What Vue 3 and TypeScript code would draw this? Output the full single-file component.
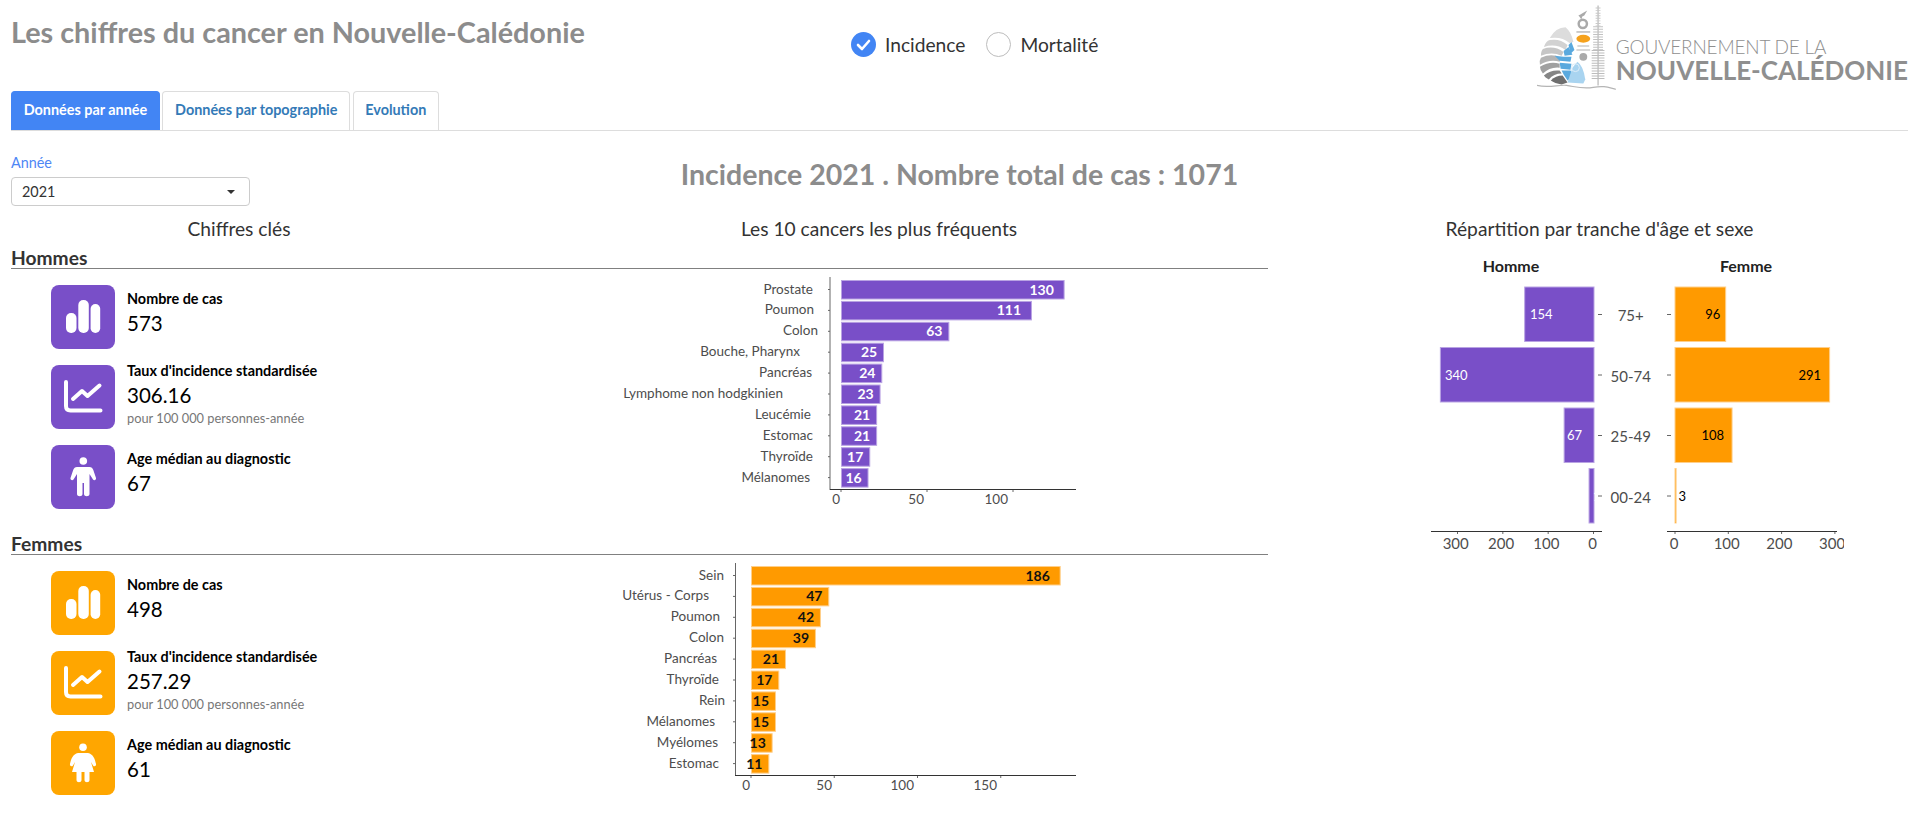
<script setup lang="ts">
interface Bar {
  name: string;
  value: number;
  end: number;
}

interface Stat {
  icon: "bars" | "trend" | "person";
  label: string;
  value: string;
  note?: string;
}

const tabs = ["Données par année", "Données par topographie", "Evolution"];

const menBars: Bar[] = [
  { name: "Prostate", value: 130, end: 813 },
  { name: "Poumon", value: 111, end: 814 },
  { name: "Colon", value: 63, end: 818 },
  { name: "Bouche, Pharynx", value: 25, end: 800 },
  { name: "Pancréas", value: 24, end: 812 },
  { name: "Lymphome non hodgkinien", value: 23, end: 783 },
  { name: "Leucémie", value: 21, end: 811 },
  { name: "Estomac", value: 21, end: 813 },
  { name: "Thyroïde", value: 17, end: 813 },
  { name: "Mélanomes", value: 16, end: 810 },
];

const womenBars: Bar[] = [
  { name: "Sein", value: 186, end: 724 },
  { name: "Utérus - Corps", value: 47, end: 709 },
  { name: "Poumon", value: 42, end: 720 },
  { name: "Colon", value: 39, end: 724 },
  { name: "Pancréas", value: 21, end: 717 },
  { name: "Thyroïde", value: 17, end: 719 },
  { name: "Rein", value: 15, end: 725 },
  { name: "Mélanomes", value: 15, end: 715 },
  { name: "Myélomes", value: 13, end: 718 },
  { name: "Estomac", value: 11, end: 719 },
];

const menStats: Stat[] = [
  { icon: "bars", label: "Nombre de cas", value: "573" },
  { icon: "trend", label: "Taux d'incidence standardisée", value: "306.16", note: "pour 100 000 personnes-année" },
  { icon: "person", label: "Age médian au diagnostic", value: "67" },
];

const womenStats: Stat[] = [
  { icon: "bars", label: "Nombre de cas", value: "498" },
  { icon: "trend", label: "Taux d'incidence standardisée", value: "257.29", note: "pour 100 000 personnes-année" },
  { icon: "person", label: "Age médian au diagnostic", value: "61" },
];

const menTicks = [
  { value: 0, end: 840 },
  { value: 50, end: 924 },
  { value: 100, end: 1008 },
];

const womenTicks = [
  { value: 0, end: 750 },
  { value: 50, end: 832 },
  { value: 100, end: 914 },
  { value: 150, end: 997 },
];

const ages = ["75+", "50-74", "25-49", "00-24"];
const pyramidMen = [154, 340, 67, 12];
const pyramidWomen = [96, 291, 108, 3];
const womenValueX = [1712.7, 1809.7, 1712.7, 1682.3];
const menValueX = [1530, 1445, 1567, 1593];

function rowY(i: number) {
  return 287 + i * 60.5;
}

function valueOffset(v: number) {
  return v >= 100 ? 23 : 15;
}

// nautilus of the logo, outer chambers from light to dark
const chambers = [
  { fill: "#dcdcdc", d: "M50 38Q56 27 66 27Q72 32 74 42L70 43Q62 36 50 38Z" },
  { fill: "#d2d2d2", d: "M44 47Q46 41 50 40Q60 38 68 45L66 50Q56 43 44 47Z" },
  { fill: "#c6c6c6", d: "M41 56Q41 51 43 49Q54 45 64 52L62 56Q52 51 41 56Z" },
  { fill: "#b4b4b4", d: "M40 65Q39 61 41 58Q52 53 61 58L60 62Q50 59 40 65Z" },
  { fill: "#a0a0a0", d: "M43 74Q40 70 40 67Q50 61 60 64L60 68Q50 67 43 74Z" },
  { fill: "#858585", d: "M49 80Q45 78 44 76Q51 70 60 71L62 74Q54 74 49 80Z" },
  { fill: "#6e6e6e", d: "M62 85Q55 84 51 81Q56 76 63 76L68 83Z" },
];

const blues = [
  "M69 45L72 42L75 50L71 54Z",
  "M64 51L69 47L73 55L65 56Z",
  "M55 56L64 57L72 57L71 62L60 61Z",
  "M60 63L72 64L71 70L61 69Z",
  "M62 71L71 71L75 76L68 81L64 75Z",
];
</script>

<template>
  <div class="page">
    <header class="top">
      <h1>Les chiffres du cancer en Nouvelle-Calédonie</h1>
      <div class="radios">
        <span class="radio checked">
          <svg viewBox="0 0 25 25" width="25" height="25">
            <path d="M7 13l4 4 7-8" fill="none" stroke="#fff" stroke-width="2.6" stroke-linecap="round" stroke-linejoin="round" />
          </svg>
        </span>
        <span class="radio-label">Incidence</span>
        <span class="radio"></span>
        <span class="radio-label">Mortalité</span>
      </div>
      <div class="logo">
        <svg width="80" height="91" viewBox="37 0 80 91">
          <path v-for="c in chambers" :key="c.d" :d="c.d" :fill="c.fill" />
          <path v-for="d in blues" :key="d" :d="d" fill="#5aa9de" />
          <path d="M73 68L78 62Q84 66 86 80L84 84L68 83Z" fill="#a9d4f0" />
          <circle cx="76" cy="68" r="4" fill="none" stroke="#dcecf8" stroke-width="1" />
          <path d="M37 86c12 3 22-1 30 0s16 4 27 2 15 0 23 2" fill="none" stroke="#b5b5b5" stroke-width="1.2" />
          <path d="M79 15c3-1 5-3 9-5l-3 5-2 1-1 3-2-3z" fill="#aaa" />
          <circle cx="83.500" cy="23.500" r="4.200" fill="none" stroke="#aaa" stroke-width="2.500" />
          <rect x="77" y="31" width="14" height="1.500" fill="#bbb" />
          <ellipse cx="84" cy="38.700" rx="7" ry="4" fill="#f5a11c" />
          <path d="M78 46h12M77 50h14" stroke="#ccc" stroke-width="1.500" />
          <circle cx="84" cy="57" r="4" fill="#aaa" />
          <line x1="99" y1="5" x2="99" y2="86" stroke="#b5b5b5" stroke-width="1.200" />
          <line x1="99" y1="7" x2="99" y2="26" stroke="#c8c8c8" stroke-width="5" stroke-dasharray="1 1.600" />
          <line x1="99" y1="26" x2="99" y2="50" stroke="#c2c2c2" stroke-width="10" stroke-dasharray="1 1.600" />
          <line x1="99" y1="50" x2="99" y2="80" stroke="#bdbdbd" stroke-width="13" stroke-dasharray="1 1.600" />
        </svg>
        <div class="logo-text">
          <span class="logo-small">GOUVERNEMENT DE LA</span>
          <span class="logo-big">NOUVELLE-CALÉDONIE</span>
        </div>
      </div>
    </header>

    <nav class="tabs">
      <a v-for="(t, i) in tabs" :key="t" class="tab" :class="{ active: i === 0 }">{{ t }}</a>
    </nav>

    <div class="toolbar">
      <div class="year">
        <label>Année</label>
        <div class="select">
          <span>2021</span>
          <i class="caret"></i>
        </div>
      </div>
      <h2>Incidence 2021 . Nombre total de cas : 1071</h2>
    </div>

    <div class="col-titles">
      <h3>Chiffres clés</h3>
      <h3>Les 10 cancers les plus fréquents</h3>
      <h3>Répartition par tranche d'âge et sexe</h3>
    </div>

    <div class="body">
      <div class="sections">
        <section class="men">
          <h4>Hommes</h4>
          <div class="row">
            <ul class="stats">
              <li v-for="s in menStats" :key="s.label" class="stat">
                <span class="icon">
                  <svg viewBox="0 0 64 64" width="64" height="64">
                    <g v-if="s.icon === 'bars'" fill="#fff">
                      <rect x="15" y="28" width="10.500" height="20" rx="5" />
                      <rect x="27.300" y="15" width="10.500" height="33" rx="5" />
                      <rect x="39.600" y="19" width="9.600" height="29" rx="4.800" />
                    </g>
                    <g v-else-if="s.icon === 'trend'" fill="none" stroke="#fff" stroke-width="4" stroke-linecap="round" stroke-linejoin="round">
                      <path d="M15 17V41q0 4.500 4.500 4.500H49.500" />
                      <path d="M22 34l9-8 5.500 5 12-10.500" />
                    </g>
                    <g v-else fill="#fff">
                      <circle cx="32.300" cy="16" r="3.800" />
                      <path d="M26 22H38.500C40.500 22 41.500 23 42.300 25L45 33C45.500 35 43 36 42 34.500L38.500 29V49C38.500 52 33 52 33 49V38H31.500V49C31.500 52 26 52 26 49V29L22.500 34.500C21.500 36 19 35 19.500 33L22.200 25C23 23 24 22 26 22Z" />
                    </g>
                  </svg>
                </span>
                <div class="stat-text">
                  <strong>{{ s.label }}</strong>
                  <span class="value">{{ s.value }}</span>
                  <small v-if="s.note">{{ s.note }}</small>
                </div>
              </li>
            </ul>
            <svg class="chart" width="500" height="240" viewBox="600 269 500 240">
              <line x1="830" y1="277" x2="830" y2="490" class="axis" />
              <line x1="830" y1="489.500" x2="1076" y2="489.500" class="axis dark" />
              <g v-for="(b, i) in menBars" :key="b.name">
                <line x1="828" x2="830" :y1="289.500 + i * 20.900" :y2="289.500 + i * 20.900" class="axis" />
                <text :x="b.end" :y="288.500 + i * 20.900" class="tick-label" text-anchor="end">{{ b.name }}</text>
                <rect x="841.500" :y="280.500 + i * 20.900" :width="b.value * 1.72 - 1" height="18.500" class="bar-men" />
                <text :x="841 + b.value * 1.72 - valueOffset(b.value)" :y="289 + i * 20.900" class="bar-value white" text-anchor="middle">{{ b.value }}</text>
              </g>
              <g v-for="t in menTicks" :key="t.value">
                <line :x1="841 + t.value * 1.72" :x2="841 + t.value * 1.72" y1="490" y2="492" class="axis" />
                <text :x="t.end" y="499" class="tick-label" text-anchor="end">{{ t.value }}</text>
              </g>
            </svg>
          </div>
        </section>

        <section class="women">
          <h4>Femmes</h4>
          <div class="row">
            <ul class="stats">
              <li v-for="s in womenStats" :key="s.label" class="stat">
                <span class="icon">
                  <svg viewBox="0 0 64 64" width="64" height="64">
                    <g v-if="s.icon === 'bars'" fill="#fff">
                      <rect x="15" y="28" width="10.500" height="20" rx="5" />
                      <rect x="27.300" y="15" width="10.500" height="33" rx="5" />
                      <rect x="39.600" y="19" width="9.600" height="29" rx="4.800" />
                    </g>
                    <g v-else-if="s.icon === 'trend'" fill="none" stroke="#fff" stroke-width="4" stroke-linecap="round" stroke-linejoin="round">
                      <path d="M15 17V41q0 4.500 4.500 4.500H49.500" />
                      <path d="M22 34l9-8 5.500 5 12-10.500" />
                    </g>
                    <g v-else fill="#fff">
                      <circle cx="32" cy="16.300" r="3.800" />
                      <path d="M27 22H37C42 23 44 28 45 33C45.500 35.500 43 36 42 34.500L40 31L43 41H38.500V49C38.500 52 33.500 52 33.500 49V41H30.500V49C30.500 52 25.500 52 25.500 49V41H21L24 31L22 34.500C21 36 18.500 35.500 19 33C20 28 22 23 27 22Z" />
                    </g>
                  </svg>
                </span>
                <div class="stat-text">
                  <strong>{{ s.label }}</strong>
                  <span class="value">{{ s.value }}</span>
                  <small v-if="s.note">{{ s.note }}</small>
                </div>
              </li>
            </ul>
            <svg class="chart" width="500" height="240" viewBox="600 555 500 240">
              <line x1="735.500" y1="563" x2="735.500" y2="776" class="axis" />
              <line x1="735" y1="775.500" x2="1076" y2="775.500" class="axis dark" />
              <g v-for="(b, i) in womenBars" :key="b.name">
                <line x1="733" x2="735" :y1="575.500 + i * 20.900" :y2="575.500 + i * 20.900" class="axis" />
                <text :x="b.end" :y="574.500 + i * 20.900" class="tick-label" text-anchor="end">{{ b.name }}</text>
                <rect x="751.500" :y="566.500 + i * 20.900" :width="b.value * 1.665 - 1" height="18.500" class="bar-women" />
                <text :x="751 + b.value * 1.665 - valueOffset(b.value)" :y="575 + i * 20.900" class="bar-value" text-anchor="middle">{{ b.value }}</text>
              </g>
              <g v-for="t in womenTicks" :key="t.value">
                <line :x1="751 + t.value * 1.665" :x2="751 + t.value * 1.665" y1="776" y2="778" class="axis" />
                <text :x="t.end" y="785" class="tick-label" text-anchor="end">{{ t.value }}</text>
              </g>
            </svg>
          </div>
        </section>
      </div>

      <svg class="pyramid" width="617" height="310" viewBox="1291 241 617 310">
        <defs>
          <clipPath id="right-clip"><rect x="1660" y="241" width="184" height="310" /></clipPath>
        </defs>
        <text x="1511" y="265" class="pyr-title" text-anchor="middle">Homme</text>
        <text x="1746" y="265" class="pyr-title" text-anchor="middle">Femme</text>

        <g v-for="(age, i) in ages" :key="age">
          <rect :x="1594 - pyramidMen[i] * 0.4533 + 0.5" :y="rowY(i)" :width="pyramidMen[i] * 0.4533 - 0.5" height="54.500" class="bar-men" />
          <text :x="menValueX[i]" :y="rowY(i) + 27" class="pyr-value white">{{ pyramidMen[i] }}</text>
          <line x1="1598" x2="1602" :y1="rowY(i) + 27.500" :y2="rowY(i) + 27.500" class="axis" />
          <text x="1630.700" :y="rowY(i) + 28" class="age-label" text-anchor="middle">{{ age }}</text>
          <line x1="1667" x2="1671" :y1="rowY(i) + 27.500" :y2="rowY(i) + 27.500" class="axis" />
          <rect x="1675" :y="rowY(i)" :width="Math.max(pyramidWomen[i] * 0.533 - 0.5, 1)" height="54.500" class="bar-women" />
          <text :x="womenValueX[i]" :y="rowY(i) + 27" class="pyr-value" text-anchor="middle">{{ pyramidWomen[i] }}</text>
        </g>

        <line x1="1431" x2="1602" y1="531.500" y2="531.500" class="axis dark" />
        <line x1="1667" x2="1837" y1="531.500" y2="531.500" class="axis dark" />
        <g clip-path="url(#right-clip)">
          <text v-for="v in [0, 100, 200, 300]" :key="v" :x="1674 + v * 0.527" y="543" class="age-label" text-anchor="middle">{{ v }}</text>
        </g>
        <g v-for="v in [0, 100, 200, 300]" :key="v">
          <line :x1="1593.500 - v * 0.4533" :x2="1593.500 - v * 0.4533" y1="532" y2="534" class="axis" />
          <text :x="1592.700 - v * 0.4533 - (v ? 1 : 0)" y="543" class="age-label" text-anchor="middle">{{ v }}</text>
          <line :x1="1675 + v * 0.533" :x2="1675 + v * 0.533" y1="532" y2="534" class="axis" />
        </g>
      </svg>
    </div>
  </div>
</template>

<style>
html,
body {
  background: #fff;
}
</style>

<style scoped>
.page {
  width: 1919px;
  height: 831px;
  box-sizing: border-box;
  padding: 0 11px;
  font-family: Lato, "Open Sans", sans-serif;
  color: #333;
  overflow: hidden;
}

.top {
  display: grid;
  grid-template-columns: 840px 1fr 371px;
  height: 91px;
}

h1 {
  margin: 0;
  padding-top: 15px;
  font-size: 28.800px;
  line-height: 34px;
  font-weight: 700;
  color: #8c8c8c;
}

.radios {
  display: flex;
  align-items: center;
  height: 25px;
  margin-top: 32px;
}

.radio {
  box-sizing: border-box;
  width: 25px;
  height: 25px;
  border: 1px solid #bdbdbd;
  border-radius: 50%;
  flex: none;
}

.radio.checked {
  background: #4285f4;
  border: 0;
}

.radio svg {
  display: block;
}

.radio-label {
  font-size: 19.200px;
  margin: 0 21px 0 9px;
}

.logo {
  display: flex;
}

.logo-text {
  display: flex;
  flex-direction: column;
  padding-top: 37px;
  white-space: nowrap;
}

.logo-small {
  font-size: 19px;
  line-height: 20px;
  letter-spacing: -0.2px;
  font-weight: 300;
  color: #8f8f8f;
}

.logo-big {
  font-size: 26px;
  line-height: 26px;
  font-weight: 700;
  color: #8f8f8f;
}

.tabs {
  display: flex;
  gap: 2.500px;
  height: 39px;
  border-bottom: 1px solid #ddd;
}

.tab {
  box-sizing: border-box;
  height: 39px;
  padding: 0 11.700px;
  border: 1px solid #ddd;
  border-bottom: 0;
  border-radius: 4px 4px 0 0;
  font-size: 14.400px;
  font-weight: 700;
  line-height: 36px;
  color: #337ab7;
}

.tab.active {
  background: #4285f4;
  border-color: #4285f4;
  color: #fff;
}

.toolbar {
  display: grid;
  grid-template-columns: 239px 1fr 239px;
  padding-top: 24px;
}

.year label {
  display: block;
  height: 16px;
  margin-bottom: 6px;
  font-size: 14.400px;
  line-height: 16px;
  color: #4d86f5;
}

.select {
  box-sizing: border-box;
  height: 29px;
  padding: 0 14px 0 10px;
  display: flex;
  align-items: center;
  justify-content: space-between;
  border: 1px solid #ccc;
  border-radius: 4px;
  font-size: 14.400px;
  color: #333;
}

.caret {
  width: 0;
  height: 0;
  border-left: 4px solid transparent;
  border-right: 4px solid transparent;
  border-top: 4px solid #333;
}

h2 {
  margin: 1px 0 0;
  text-align: center;
  font-size: 28.500px;
  line-height: 36px;
  font-weight: 700;
  color: #8c8c8c;
}

.col-titles {
  display: grid;
  grid-template-columns: 456px 824px 1fr;
  margin-top: 11px;
}

h3 {
  margin: 0;
  text-align: center;
  font-size: 19.200px;
  line-height: 24px;
  font-weight: 400;
}

.body {
  display: flex;
}

.sections {
  width: 1257px;
  flex: none;
  padding-top: 7px;
}

h4 {
  box-sizing: border-box;
  height: 21px;
  margin: 0;
  font-size: 19.200px;
  line-height: 20px;
  font-weight: 700;
  border-bottom: 1px solid #808080;
}

.row {
  display: flex;
  height: 265px;
}

.stats {
  width: 589px;
  flex: none;
  margin: 0;
  padding: 16px 0 0 40px;
  box-sizing: border-box;
  list-style: none;
  display: flex;
  flex-direction: column;
  gap: 16px;
}

.stat {
  display: flex;
  align-items: center;
  gap: 12px;
  height: 64px;
}

.icon {
  width: 64px;
  height: 64px;
  border-radius: 8px;
  flex: none;
}

.icon svg {
  display: block;
}

.men .icon {
  background: #794fc8;
}

.women .icon {
  background: #ffa600;
}

.stat-text {
  display: flex;
  flex-direction: column;
  margin-bottom: 7px;
}

.stat-text strong {
  font-size: 14.400px;
  line-height: 18px;
  color: #000;
}

.value {
  font-size: 20.500px;
  line-height: 30px;
  color: #000;
}

.stat-text small {
  font-size: 12.800px;
  line-height: 16px;
  color: #777;
}

.chart,
.pyramid {
  display: block;
  flex: none;
}

.pyramid {
  margin-left: 23px;
}

.axis {
  stroke: #666;
  stroke-width: 1;
}

.axis.dark {
  stroke: #333;
}

.tick-label {
  font-size: 13.500px;
  fill: #4d4d4d;
  dominant-baseline: central;
}

.bar-men {
  fill: #794fc8;
  stroke: #b9a3e3;
  stroke-width: 1;
}

.bar-women {
  fill: #ff9a00;
  stroke: #ffcf8a;
  stroke-width: 1;
}

.bar-value {
  font-size: 14px;
  font-weight: 700;
  fill: #111;
  dominant-baseline: central;
}

.bar-value.white,
.pyr-value.white {
  fill: #fff;
}

.pyr-title {
  font-size: 16px;
  font-weight: 700;
  fill: #222;
  dominant-baseline: central;
}

.pyr-value {
  font-size: 13px;
  fill: #000;
  dominant-baseline: central;
}

.age-label {
  font-size: 15px;
  fill: #4d4d4d;
  dominant-baseline: central;
}
</style>
